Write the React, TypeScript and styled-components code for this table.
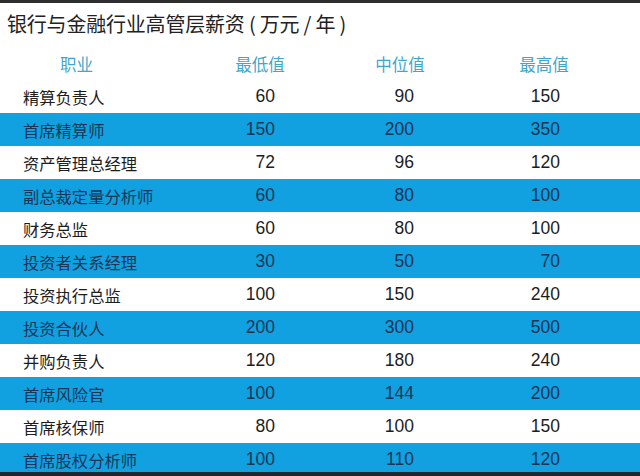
import React from "react";
import styled, { createGlobalStyle } from "styled-components";

const Global = createGlobalStyle`
  html, body { margin: 0; padding: 0; background: #fff; }
  body { font-family: "Liberation Sans", "Noto Sans CJK SC", sans-serif; }
`;

const Page = styled.div`
  width: 640px;
  height: 476px;
  overflow: hidden;
  display: flex;
  flex-direction: column;
  border-top: 3px solid #2e2e2e;
  box-sizing: border-box;
  position: relative;
`;

const Title = styled.div`
  height: 44px;
  display: flex;
  align-items: center;
  padding-left: 7px;
  padding-bottom: 3px;
  box-sizing: border-box;
  font-size: 20px;
  color: #222;
  font-family: "Noto Sans CJK SC", sans-serif;
  letter-spacing: -0.2px;
`;

const Row = styled.div<{ $blue?: boolean; $h?: number }>`
  flex: none;
  height: ${(p) => p.$h ?? 33}px;
  display: grid;
  grid-template-columns: 190px 140px 140px 170px;
  align-items: center;
  background: ${(p) => (p.$blue ? "#11a0e0" : "#fff")};
  color: ${(p) => (p.$blue ? "#1b3556" : "#1d1d1d")};
`;

const Head = styled.div<{ $pl?: number; $pr?: number; $align?: string }>`
  font-family: "Noto Sans CJK SC", sans-serif;
  font-size: 16.5px;
  color: #3ea7ca;
  text-align: ${(p) => p.$align ?? "center"};
  padding-left: ${(p) => p.$pl ?? 0}px;
  padding-right: ${(p) => p.$pr ?? 0}px;
`;

const Name = styled.div`
  font-family: "Noto Sans CJK SC", sans-serif;
  font-size: 16.3px;
  padding-left: 23px;
  white-space: nowrap;
`;

const Num = styled.div<{ $pr: number }>`
  font-family: "Liberation Sans", sans-serif;
  font-size: 17.5px;
  text-align: right;
  padding-right: ${(p) => p.$pr}px;
`;

const BottomBar = styled.div`
  position: absolute;
  left: 0;
  right: 0;
  bottom: 0;
  height: 4px;
  background: #1e2630;
`;

const data: [string, number, number, number][] = [
  ["精算负责人", 60, 90, 150],
  ["首席精算师", 150, 200, 350],
  ["资产管理总经理", 72, 96, 120],
  ["副总裁定量分析师", 60, 80, 100],
  ["财务总监", 60, 80, 100],
  ["投资者关系经理", 30, 50, 70],
  ["投资执行总监", 100, 150, 240],
  ["投资合伙人", 200, 300, 500],
  ["并购负责人", 120, 180, 240],
  ["首席风险官", 100, 144, 200],
  ["首席核保师", 80, 100, 150],
  ["首席股权分析师", 100, 110, 120],
];

export default function App() {
  return (
    <>
      <Global />
      <Page>
        <Title>银行与金融行业高管层薪资 ( 万元 / 年 )</Title>
        <Row>
          <Head $align="left" $pl={60}>职业</Head>
          <Head>最低值</Head>
          <Head>中位值</Head>
          <Head $pr={22}>最高值</Head>
        </Row>
        {data.map(([n, a, b, c], i) => (
          <Row key={n} $blue={i % 2 === 1}>
            <Name>{n}</Name>
            <Num $pr={55}>{a}</Num>
            <Num $pr={56}>{b}</Num>
            <Num $pr={80}>{c}</Num>
          </Row>
        ))}
        <BottomBar />
      </Page>
    </>
  );
}
